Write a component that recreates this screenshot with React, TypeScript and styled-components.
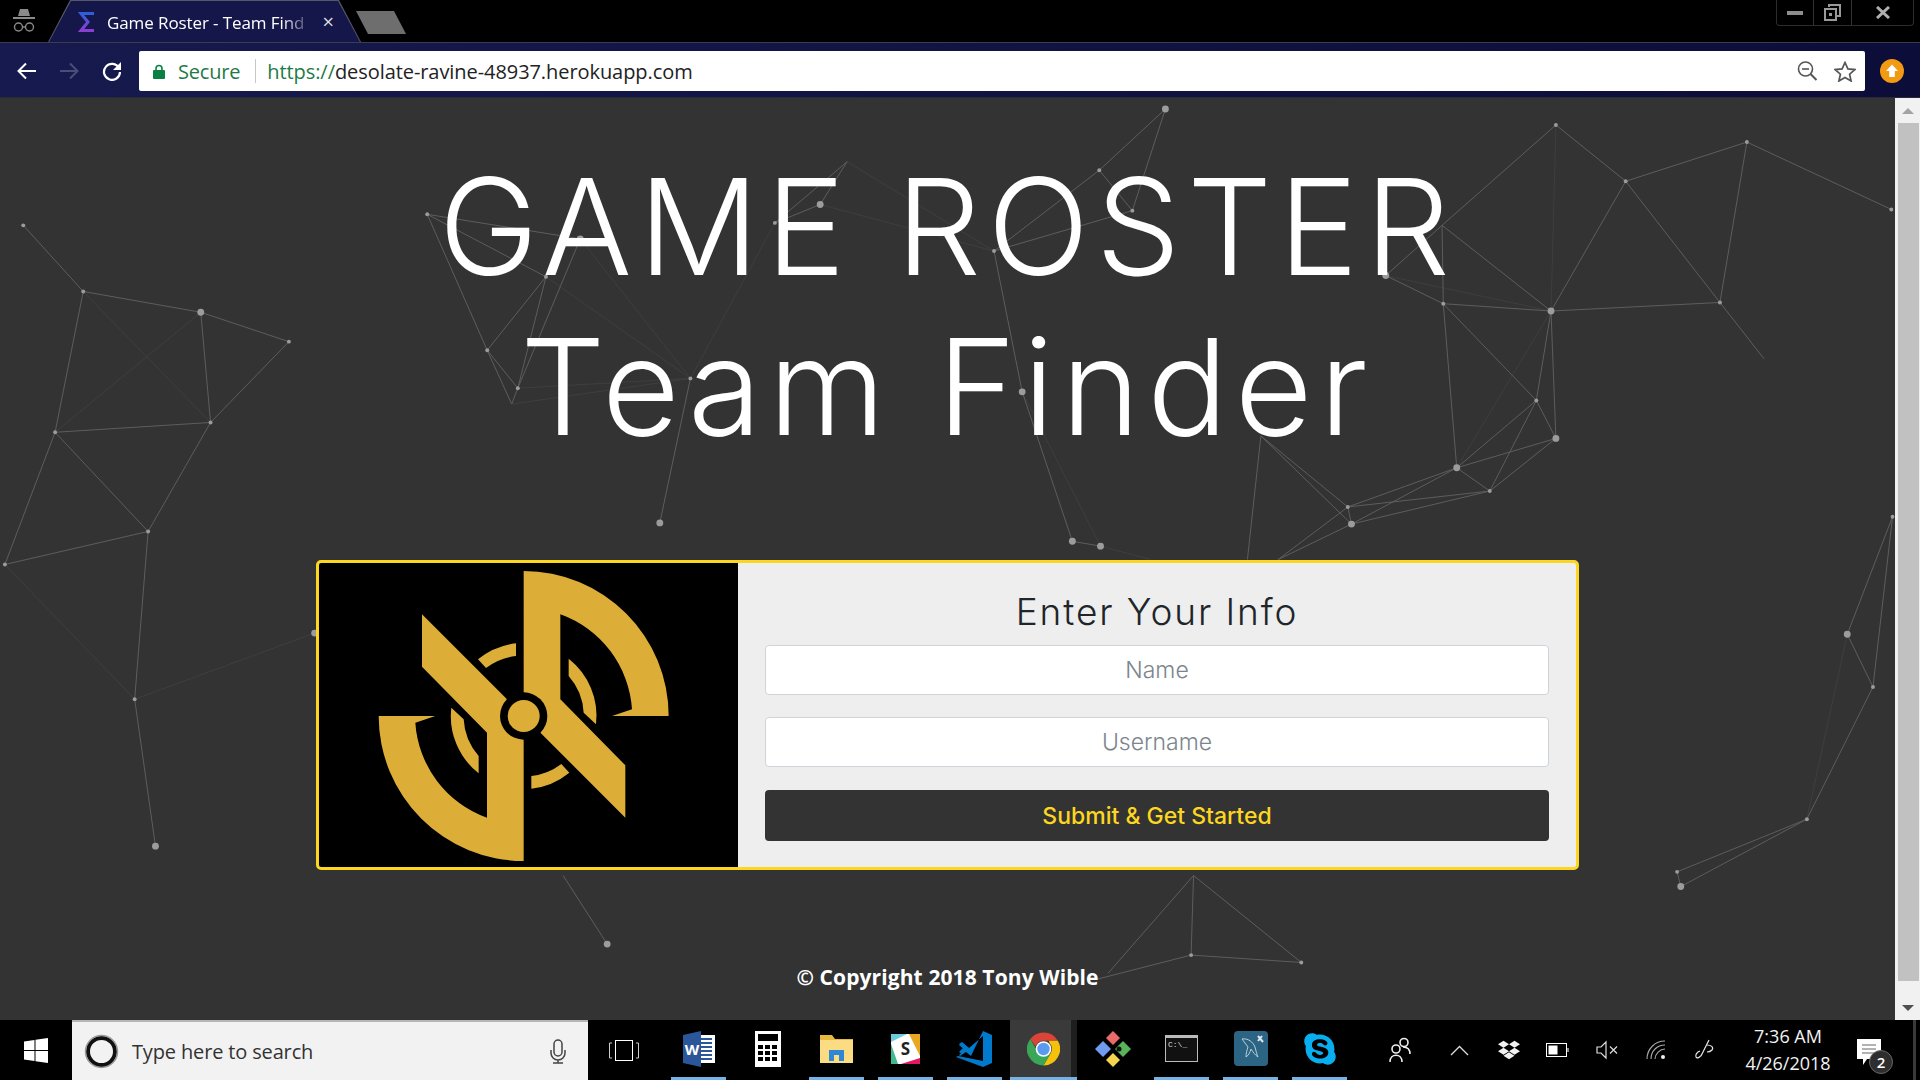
import React from 'react';
import styled, { createGlobalStyle } from 'styled-components';
import { FaDropbox, FaSkype } from 'react-icons/fa';

const GlobalStyle = createGlobalStyle`
  html, body {
    margin: 0;
    padding: 0;
    height: 100%;
    overflow: hidden;
    background: #000;
  }
  * { box-sizing: border-box; }
`;

const uiFont = `"Open Sans", "Liberation Sans", sans-serif`;
const pageFont = `Inter, "Open Sans", sans-serif`;

const Screen = styled.div`
  width: 1920px;
  height: 1080px;
  display: flex;
  flex-direction: column;
  font-family: ${uiFont};
`;

/* browser chrome */
const TabStrip = styled.div`
  height: 43px;
  background: #000;
  display: flex;
  align-items: flex-end;
  border-bottom: 1px solid #3b3c52;
`;

const IncognitoSlot = styled.div`
  width: 48px;
  height: 42px;
  display: flex;
  align-items: center;
  justify-content: center;
`;

const TabEdge = styled.div`
  width: 313px;
  height: 42px;
  background: #55566a;
  clip-path: polygon(0 100%, 22px 0, 291px 0, 100% 100%);
  padding: 1px 1px 0;
`;

const Tab = styled.div`
  height: 100%;
  background: #15174a;
  clip-path: polygon(0 100%, 22px 0, 289px 0, 100% 100%);
  display: flex;
  align-items: center;
  padding: 1px 26px 0 29px;
  color: #fff;
`;

const TabTitle = styled.div`
  margin-left: 11px;
  flex: 1;
  font-size: 17px;
  letter-spacing: -0.1px;
  white-space: nowrap;
  -webkit-mask-image: linear-gradient(to right, #000 84%, transparent 99%);
  mask-image: linear-gradient(to right, #000 84%, transparent 99%);
`;

const TabClose = styled.div`
  margin-left: 8px;
  font-size: 20px;
  line-height: 1;
  color: #ddd;
`;

const NewTab = styled.div`
  width: 50px;
  height: 23px;
  margin: 0 0 8px -5px;
  background: #6e6e6e;
  clip-path: polygon(0 0, 38px 0, 100% 100%, 12px 100%);
`;

const Spacer = styled.div`
  flex: 1;
`;

const WindowButtons = styled.div`
  align-self: flex-start;
  width: 138px;
  height: 26px;
  margin-right: 6px;
  border: 1px solid #2c2c2c;
  border-top: none;
  border-radius: 0 0 4px 4px;
  display: flex;
`;

const WindowButton = styled.div<{ $w: number; $last?: boolean }>`
  width: ${p => p.$w}px;
  display: flex;
  align-items: center;
  justify-content: center;
  border-right: ${p => (p.$last ? 'none' : '1px solid #333')};
`;

const Toolbar = styled.div`
  height: 55px;
  padding-top: 2px;
  background: linear-gradient(to right, #171a4e, #0c0d38);
  display: flex;
  align-items: center;
  border-bottom: 1px solid #2a2a35;
`;

const NavButton = styled.div<{ $w: number }>`
  width: ${p => p.$w}px;
  display: flex;
  justify-content: center;
`;

const AddressBar = styled.div`
  width: 1726px;
  height: 40px;
  background: #fff;
  border-radius: 2px;
  display: flex;
  align-items: center;
  padding: 0 9px 0 14px;
  font-size: 20px;
`;

const SecureLabel = styled.span`
  margin-left: 13px;
  color: #1f7a47;
  letter-spacing: -0.2px;
`;

const AddressDivider = styled.div`
  width: 1px;
  height: 24px;
  margin: 0 11px 0 15px;
  background: #c8c8c8;
`;

const Url = styled.span`
  color: #222;
  letter-spacing: -0.07px;
`;

const UrlScheme = styled.span`
  color: #1f7a47;
`;

const BarIcons = styled.div`
  display: flex;
  align-items: center;
  gap: 16px;
`;

const UpdateSlot = styled.div`
  flex: 1;
  display: flex;
  justify-content: center;
  padding-right: 2px;
`;

/* page */
const Main = styled.div`
  flex: 1;
  display: flex;
  min-height: 0;
`;

const Page = styled.main`
  position: relative;
  flex: 1;
  background: #333;
  overflow: hidden;
`;

const Network = styled.svg`
  position: absolute;
  inset: 0;
  width: 100%;
  height: 100%;
`;

const Content = styled.div`
  position: relative;
  display: flex;
  flex-direction: column;
  align-items: center;
  padding-top: 48px;
`;

const Title = styled.h1`
  margin: 0;
  font-family: ${pageFont};
  font-weight: 300;
  font-size: 134px;
  line-height: 160px;
  color: #fff;
  text-align: center;
`;

const TitleLine = styled.span<{ $spacing: number }>`
  display: block;
  white-space: nowrap;
  letter-spacing: ${p => p.$spacing}px;
`;

const Card = styled.section`
  width: 1263px;
  height: 310px;
  margin-top: 94px;
  display: flex;
  border: 3px solid #fdd71f;
  border-radius: 5px;
  background: #eee;
  overflow: hidden;
`;

const LogoPanel = styled.div`
  width: 419px;
  background: #000;
  display: flex;
  align-items: center;
  justify-content: center;
`;

const FormPanel = styled.form`
  flex: 1;
  display: flex;
  flex-direction: column;
  padding: 25px 27px 0;
`;

const FormHeading = styled.h2`
  margin: 0 0 9px;
  height: 48px;
  font-family: ${pageFont};
  font-weight: 300;
  font-size: 37px;
  line-height: 48px;
  letter-spacing: 1.9px;
  color: #212529;
  text-align: center;
`;

const TextInput = styled.input`
  height: 50px;
  margin-bottom: 22px;
  border: 1px solid #ced4da;
  border-radius: 4px;
  background: #fff;
  text-align: center;
  font-family: ${pageFont};
  font-weight: 300;
  font-size: 23px;
  outline: none;

  &::placeholder {
    color: #7d858c;
    opacity: 1;
  }
`;

const SubmitButton = styled.button`
  height: 51px;
  margin-top: 1px;
  border: none;
  border-radius: 4px;
  background: #333;
  color: #fdd71f;
  font-family: ${pageFont};
  font-weight: 500;
  font-size: 23px;
  cursor: pointer;
`;

const Copyright = styled.p`
  margin: 93px 0 0;
  font-family: ${uiFont};
  font-weight: 700;
  font-size: 21px;
  line-height: 28px;
  letter-spacing: 0.1px;
  color: #fff;
`;

const Scrollbar = styled.div`
  width: 25px;
  background: #f1f1f1;
  display: flex;
  flex-direction: column;
  align-items: center;
  padding-left: 1px;
`;

const ScrollArrow = styled.div<{ $down?: boolean }>`
  height: 25px;
  flex: none;
  display: flex;
  align-items: center;
  justify-content: center;

  &::before {
    content: '';
    border-left: 6px solid transparent;
    border-right: 6px solid transparent;
    ${p => (p.$down ? 'border-top: 6px solid #505050;' : 'border-bottom: 6px solid #a3a3a3;')}
  }
`;

const ScrollThumb = styled.div`
  width: 21px;
  height: 858px;
  background: #c1c1c1;
`;

/* taskbar */
const Taskbar = styled.footer`
  height: 60px;
  background: #000;
  display: flex;
  align-items: stretch;
  color: #fff;
`;

const StartButton = styled.div`
  width: 72px;
  display: flex;
  align-items: center;
  justify-content: center;
`;

const SearchBox = styled.div`
  width: 516px;
  background: #f2f2f2;
  border-top: 2px solid #b5b5b5;
  display: flex;
  align-items: center;
  padding: 0 21px 0 12px;
`;

const SearchText = styled.span`
  margin-left: 13px;
  flex: 1;
  font-size: 20px;
  color: #333;
  letter-spacing: -0.15px;
`;

const TaskView = styled.div`
  width: 72px;
  margin-right: 4px;
  display: flex;
  align-items: center;
  justify-content: center;
`;

const AppCell = styled.div<{ $active?: boolean }>`
  width: 69px;
  padding: ${p => (p.$active ? '0 1px' : '0 7px')};
`;

const AppButton = styled.div<{ $open?: boolean; $active?: boolean }>`
  height: 100%;
  display: flex;
  align-items: center;
  justify-content: center;
  border-bottom: 3px solid ${p => (p.$open ? '#76b3e4' : 'transparent')};
  background: ${p => (p.$active ? 'linear-gradient(to right, #3a3a3a 91%, #1e1e1e 91%)' : 'transparent')};
`;

const TrayCell = styled.div<{ $ml?: number; $w?: number }>`
  width: ${p => p.$w ?? 49}px;
  margin-left: ${p => p.$ml ?? 0}px;
  display: flex;
  align-items: center;
  justify-content: center;
`;

const Clock = styled.div`
  width: 116px;
  margin-left: 1px;
  display: flex;
  flex-direction: column;
  align-items: center;
  justify-content: center;
  gap: 6px;
  font-size: 18px;
  line-height: 21px;
  color: #f2f2f2;
`;

const NoticeSlot = styled.div`
  position: relative;
  width: 70px;
  padding: 5px 22px 0 0;
  display: flex;
  align-items: center;
  justify-content: center;
  border-right: 3px solid #3a3a3a;
`;

const NoticeBadge = styled.div`
  position: absolute;
  right: 20px;
  bottom: 6px;
  width: 24px;
  height: 24px;
  border-radius: 50%;
  background: #2e2e2e;
  border: 1px solid #666;
  display: flex;
  align-items: center;
  justify-content: center;
  font-size: 15px;
  font-weight: 600;
`;

/* background graph, in the coordinates of a 1568 wide frame */
type P = [number, number];
const pts: Record<string, P> = {
  a: [19, 184], b: [68, 238], c: [164, 255], d: [236, 279], e: [45, 353], f: [172, 345], g: [121, 434], h: [4, 461],
  i: [110, 571], j: [127, 691], k: [349, 175], l: [398, 286], m: [446, 226], n: [423, 317], o: [418, 330], k2: [474, 195],
  T2: [564, 309], p: [633, 182], q: [692, 132], r: [670, 167], s: [812, 205], t: [898, 139], u: [925, 172], v: [952, 89],
  w: [835, 320], x: [876, 442], y: [899, 446], y2: [940, 457], z: [1132, 225], P: [1178, 184], A: [1179, 248], B: [1267, 254], C: [1328, 148],
  D: [1271, 102], E: [1427, 116], F: [1545, 171], G: [1405, 247], H: [1441, 293], I: [1255, 327], J: [1271, 358],
  K: [1217, 401], L: [1190, 382], M: [1104, 428], N: [1101, 414], O: [1030, 356], Q: [1044, 457], R: [1019, 457],
  S: [539, 427], U: [460, 715], V: [496, 771], W: [895, 800], X: [975, 715], X2: [905, 795], Y: [973, 780],
  Z: [1063, 786], aa: [1509, 518], ab: [1546, 422], ac: [1530, 561], ad: [1476, 669], ae: [1373, 724], af: [1370, 712],
  ag: [257, 517],
};

const edges = [
  'a-b', 'b-c', 'c-d', 'b-e', 'c-f', 'f-e', 'd-f', 'e-g', 'f-g', 'e-h', 'h-g', 'g-i', 'i-j',
  'k-l', 'k-m', 'k-k2', 'l-m', 'm-n', 'l-n', 'l-o', 'o-n', 'k2-n', 'T2-S', 'p-q', 'p-r', 'r-q',
  's-t', 't-u', 'v-u', 't-v', 'u-s', 's-w', 'w-x', 'x-y',
  'P-D', 'P-A', 'P-B', 'P-z', 'z-A', 'A-B', 'B-C', 'C-D', 'C-E', 'E-F', 'C-G', 'E-G', 'G-H', 'G-B',
  'B-I', 'B-J', 'I-J', 'A-I', 'A-L', 'I-L', 'I-K', 'L-K', 'L-J', 'K-J', 'L-M', 'L-N', 'N-K', 'M-K', 'N-M', 'O-M', 'O-N', 'M-Q', 'N-Q', 'O-R',
  'U-V', 'X2-X', 'X-Y', 'W-Y', 'X-Z', 'Y-Z',
  'aa-ab', 'ab-ac', 'aa-ac', 'ac-ad', 'ad-ae', 'ad-af', 'ae-af',
];

const faintEdges = [
  'b-f', 'c-e', 'h-i', 'i-ag', 'm-T2', 'n-T2', 'o-T2', 'p-T2', 'k2-T2', 'r-s', 'q-s', 'w-y', 'y-y2', 'z-B', 'B-D', 'B-L', 'aa-ad',
];

const dots = ['a', 'b', 'c', 'd', 'e', 'f', 'g', 'h', 'i', 'j', 'k', 'l', 'm', 'n', 'k2', 'T2', 'p', 'r', 's', 't', 'u', 'v', 'w', 'x', 'y', 'z', 'A', 'B', 'C', 'D', 'E', 'F', 'G', 'I', 'J', 'K', 'L', 'M', 'N', 'S', 'V', 'Y', 'Z', 'aa', 'ac', 'ad', 'ae', 'af', 'ag', 'ab'];
const bigDots = ['j', 'S', 'V', 'B', 'ae', 'aa', 'L', 'J', 'M', 'x', 'y', 'c', 'v', 'k2', 'r', 'z', 'w', 'ag'];

const NetworkBackground = () => (
  <Network viewBox="0 80 1548 753" preserveAspectRatio="none">
    {faintEdges.map(e => {
      const [from, to] = e.split('-');
      return (
        <line
          key={e}
          x1={pts[from][0]}
          y1={pts[from][1]}
          x2={pts[to][0]}
          y2={pts[to][1]}
          stroke="#3e3e3e"
          strokeWidth="0.8"
        />
      );
    })}
    {edges.map(e => {
      const [from, to] = e.split('-');
      return (
        <line
          key={e}
          x1={pts[from][0]}
          y1={pts[from][1]}
          x2={pts[to][0]}
          y2={pts[to][1]}
          stroke="#5e5e5e"
          strokeWidth="0.8"
        />
      );
    })}
    {dots.map(d => (
      <circle key={d} cx={pts[d][0]} cy={pts[d][1]} r={bigDots.includes(d) ? 2.8 : 1.6} fill="#9c9c9c" />
    ))}
  </Network>
);

const blade = 'M640 45A435 435 0 0 1 1075 480L905 480L965 460A325 325 0 0 0 750 175L750 430L945 628L945 785L640 480Z';
const innerArc = 'M775 308A218 218 0 0 1 857 505L820 470A180 180 0 0 0 775 360Z';
const sideArc = 'M617 262L617 300A181 181 0 0 0 527 336L503 310A218 218 0 0 1 617 262Z';

const Logo = () => (
  <svg width="419" height="304" viewBox="26 21 1257 912">
    <g fill="#dcae38">
      {[0, 180].map(r => (
        <g key={r} transform={`rotate(${r} 640 480)`}>
          <path d={blade} />
          <path d={innerArc} />
          <path d={sideArc} />
        </g>
      ))}
      <circle cx="640" cy="480" r="71" fill="#000" />
      <circle cx="640" cy="480" r="48" />
    </g>
  </svg>
);

const Incognito = () => (
  <svg width="24" height="26" viewBox="0 0 24 26" fill="none" stroke="#8a8a8a">
    <path d="M8 1h8l2 7H6z" fill="#8a8a8a" stroke="none" />
    <path d="M1 9h22v2H1z" fill="#8a8a8a" stroke="none" />
    <circle cx="6.5" cy="19" r="4" strokeWidth="1.4" />
    <circle cx="17.5" cy="19" r="4" strokeWidth="1.4" />
    <path d="M10.5 19h3" strokeWidth="1.4" />
  </svg>
);

const Favicon = () => (
  <svg width="18" height="22" viewBox="0 0 18 22" fill="none">
    <defs>
      <linearGradient id="sigma" x1="0" y1="0" x2="0" y2="1">
        <stop offset="0" stopColor="#2f5fd8" />
        <stop offset="1" stopColor="#8a3fd0" />
      </linearGradient>
    </defs>
    <path d="M16 2.5H3l7 8.5-7 8.5h13" stroke="url(#sigma)" strokeWidth="3" />
  </svg>
);

const SmallIcon = ({ children, w = 20, h = 20, vb }: { children: React.ReactNode; w?: number; h?: number; vb?: string }) => (
  <svg width={w} height={h} viewBox={vb ?? `0 0 ${w} ${h}`} fill="none">
    {children}
  </svg>
);

const ChromeLogo = () => (
  <svg width="33" height="36" viewBox="0 0 32 32">
    <path d="M16 0a16 16 0 0 1 13.9 8H16a8 8 0 0 0-7.6 5.5L3.2 6.3A16 16 0 0 1 16 0z" fill="#db4437" />
    <path d="M29.9 8A16 16 0 0 1 16 32l6.9-12A8 8 0 0 0 22 10.5L21 8z" fill="#f4c20d" />
    <path d="M16 32A16 16 0 0 1 3.2 6.3l6.7 11.4A8 8 0 0 0 22.9 20L16 32z" fill="#3aa757" />
    <circle cx="16" cy="16" r="7.6" fill="#fff" />
    <circle cx="16" cy="16" r="6" fill="#5a9bf0" />
  </svg>
);

const WordLogo = () => (
  <svg width="32" height="36" viewBox="0 0 32 36">
    <rect x="12" y="4" width="20" height="28" fill="#fff" />
    <path d="M15 8h14M15 12h14M15 16h14M15 20h14M15 24h14M15 28h14" stroke="#2b579a" strokeWidth="2" />
    <path d="M0 4l18-4v36L0 32z" fill="#2b579a" />
    <text x="9" y="24" fontSize="15" fontWeight="700" fill="#fff" fontFamily="Open Sans" textAnchor="middle">W</text>
  </svg>
);

const CalcLogo = () => (
  <svg width="26" height="36" viewBox="0 0 26 36">
    <rect width="26" height="36" fill="#fff" />
    <rect x="3" y="3" width="20" height="7" fill="#000" />
    {[14, 20, 26].map(y => [3, 10, 17].map(x => <rect key={`${x}${y}`} x={x} y={y} width="5" height="4" fill="#000" />))}
  </svg>
);

const FolderLogo = () => (
  <svg width="33" height="28" viewBox="0 0 33 28">
    <path d="M0 0h12l3 4h18v24H0z" fill="#e8b93f" />
    <rect y="5" width="33" height="23" fill="#fbdc82" />
    <path d="M9 26V15h15v11h-5v-6h-5v6z" fill="#2f86d4" />
  </svg>
);

const SlackLogo = () => (
  <svg width="29" height="30" viewBox="0 0 29 30">
    <rect width="29" height="30" fill="#fff" />
    <path d="M0 0h16L0 8z" fill="#6ecadc" />
    <path d="M18 0h11v22z" fill="#e9a820" />
    <path d="M29 24v6H10z" fill="#e01765" />
    <path d="M0 10v20h7z" fill="#3eb991" />
    <text x="14.5" y="21" fontSize="17" fontWeight="700" fill="#222" fontFamily="Open Sans" textAnchor="middle">S</text>
  </svg>
);

const VsCodeLogo = () => (
  <svg width="37" height="36" viewBox="0 0 37 36">
    <path d="M27 0l9 4v28l-9 4L0 26l2-1 25 5V5L13 17l-7-5-3 2 6 5-6 5 1 1 6-4 5 4z" fill="#007acc" />
    <path d="M3 13l3-2 7 6-7 6-3-2 4-4z" fill="#007acc" />
  </svg>
);

const GitKrakenLogo = () => (
  <svg width="36" height="36" viewBox="0 0 36 36">
    <path d="M18 0l-7 7 7 7 7-7z" fill="#e96b6b" />
    <path d="M8 10L0 18l8 8 8-8z" fill="#6f9bf0" />
    <path d="M28 10l-8 8 8 8 8-8z" fill="#59b35a" />
    <path d="M18 22l-7 7 7 7 7-7z" fill="#f3d54e" />
    <circle cx="24" cy="18" r="2.5" fill="#111" />
  </svg>
);

const CmdLogo = () => (
  <svg width="33" height="27" viewBox="0 0 33 27">
    <rect width="33" height="27" fill="#bbb" />
    <rect x="1" y="3" width="31" height="23" fill="#111" />
    <text x="3" y="12" fontSize="8" fill="#ddd" fontFamily="Liberation Mono">C:\_</text>
  </svg>
);

const MySqlLogo = () => (
  <svg width="34" height="35" viewBox="0 0 34 35">
    <rect width="34" height="35" rx="4" fill="#2c6484" />
    <path d="M8 8c6-1 11 3 13 8 1 4 2 8 3 10-3-2-5-5-7-8-1 3-2 6-5 8 0-4 1-7 2-10-2-3-4-5-6-8z" stroke="#b8d0dc" strokeWidth="1" fill="none" />
    <path d="M24 5l5 6M28 5l-4 5" stroke="#dce8ee" strokeWidth="2" />
  </svg>
);

const apps = [
  { id: 'word', node: <WordLogo />, open: true },
  { id: 'calc', node: <CalcLogo /> },
  { id: 'folder', node: <FolderLogo />, open: true },
  { id: 'slack', node: <SlackLogo />, open: true },
  { id: 'vscode', node: <VsCodeLogo />, open: true },
  { id: 'chrome', node: <ChromeLogo />, open: true, active: true },
  { id: 'git', node: <GitKrakenLogo /> },
  { id: 'cmd', node: <CmdLogo />, open: true },
  { id: 'mysql', node: <MySqlLogo />, open: true },
  { id: 'skype', node: <FaSkype size={36} color="#08aef0" />, open: true },
];

const App: React.FC = () => (
  <Screen>
    <GlobalStyle />
    <TabStrip>
      <IncognitoSlot>
        <Incognito />
      </IncognitoSlot>
      <TabEdge>
        <Tab>
          <Favicon />
          <TabTitle>Game Roster - Team Find</TabTitle>
          <TabClose>×</TabClose>
        </Tab>
      </TabEdge>
      <NewTab />
      <Spacer />
      <WindowButtons>
        <WindowButton $w={37}>
          <SmallIcon w={16} h={4}>
            <rect width="16" height="4" fill="#8d8d8d" />
          </SmallIcon>
        </WindowButton>
        <WindowButton $w={38}>
          <SmallIcon w={17} h={17}>
            <path d="M5 3V1h11v11h-3M1 5h11v11H1z" stroke="#9a9a9a" strokeWidth="2" />
            <rect x="5" y="9" width="3" height="3" fill="#9a9a9a" />
          </SmallIcon>
        </WindowButton>
        <WindowButton $w={61} $last>
          <SmallIcon w={14} h={13}>
            <path d="M1 1l12 11M13 1L1 12" stroke="#b0b0b0" strokeWidth="3" />
          </SmallIcon>
        </WindowButton>
      </WindowButtons>
    </TabStrip>

    <Toolbar>
      <NavButton $w={53}>
        <SmallIcon w={20} h={18}>
          <path d="M19 9H2M9 1.5L1.5 9 9 16.5" stroke="#fff" strokeWidth="2" />
        </SmallIcon>
      </NavButton>
      <NavButton $w={32}>
        <SmallIcon w={20} h={18}>
          <path d="M1 9h17M11 1.5L18.5 9 11 16.5" stroke="#4a4d78" strokeWidth="2" />
        </SmallIcon>
      </NavButton>
      <NavButton $w={54}>
        <SmallIcon w={20} h={20}>
          <path d="M17 7a8 8 0 1 0 1 4" stroke="#fff" strokeWidth="2.2" />
          <path d="M19 1v8h-8z" fill="#fff" />
        </SmallIcon>
      </NavButton>
      <AddressBar>
        <SmallIcon w={12} h={15}>
          <path d="M3 7V4.5a3 3 0 0 1 6 0V7" stroke="#0b8043" strokeWidth="1.6" />
          <rect y="6" width="12" height="9" rx="1" fill="#0b8043" />
        </SmallIcon>
        <SecureLabel>Secure</SecureLabel>
        <AddressDivider />
        <Url>
          <UrlScheme>https://</UrlScheme>desolate-ravine-48937.herokuapp.com
        </Url>
        <Spacer />
        <BarIcons>
          <SmallIcon w={21} h={20}>
            <circle cx="8.5" cy="8" r="7" stroke="#555" strokeWidth="1.6" />
            <path d="M5 8h7" stroke="#555" strokeWidth="1.6" />
            <path d="M13.5 13l6 6" stroke="#555" strokeWidth="2" />
          </SmallIcon>
          <SmallIcon w={22} h={21}>
            <path d="M11 1.5l2.9 6.4 6.9.7-5.2 4.6 1.5 6.8-6.1-3.5-6.1 3.5 1.5-6.8L1.2 8.6l6.9-.7z" stroke="#555" strokeWidth="1.7" />
          </SmallIcon>
        </BarIcons>
      </AddressBar>
      <UpdateSlot>
        <SmallIcon w={24} h={24}>
          <circle cx="12" cy="12" r="12" fill="#f39a13" />
          <path d="M12 5.5l6 6.5h-3.2v6H9.2v-6H6z" fill="#fff" />
        </SmallIcon>
      </UpdateSlot>
    </Toolbar>

    <Main>
      <Page>
        <NetworkBackground />
        <Content>
          <Title>
            <TitleLine $spacing={6.5}>GAME ROSTER</TitleLine>
            <TitleLine $spacing={7}>Team Finder</TitleLine>
          </Title>
          <Card>
            <LogoPanel>
              <Logo />
            </LogoPanel>
            <FormPanel>
              <FormHeading>Enter Your Info</FormHeading>
              <TextInput placeholder="Name" />
              <TextInput placeholder="Username" />
              <SubmitButton type="button">Submit &amp; Get Started</SubmitButton>
            </FormPanel>
          </Card>
          <Copyright>© Copyright 2018 Tony Wible</Copyright>
        </Content>
      </Page>
      <Scrollbar>
        <ScrollArrow />
        <ScrollThumb />
        <Spacer />
        <ScrollArrow $down />
      </Scrollbar>
    </Main>

    <Taskbar>
      <StartButton>
        <SmallIcon w={24} h={25}>
          <path d="M0 3.5l10.5-1.5v10H0zM11.5 1.8L24 0v12H11.5zM0 13h10.5v10L0 21.5zM11.5 13H24v12l-12.5-1.8z" fill="#fff" />
        </SmallIcon>
      </StartButton>
      <SearchBox>
        <SmallIcon w={35} h={35}>
          <circle cx="17.5" cy="17.5" r="13.5" stroke="#111" strokeWidth="4" />
          <circle cx="17.5" cy="17.5" r="16" stroke="#999" strokeWidth="1.5" />
        </SmallIcon>
        <SearchText>Type here to search</SearchText>
        <SmallIcon w={18} h={25}>
          <rect x="5" y="1" width="8" height="16" rx="4" stroke="#444" strokeWidth="1.5" />
          <path d="M2 11v3a7 7 0 0 0 14 0v-3M9 21v3M4 24h10" stroke="#444" strokeWidth="1.5" />
        </SmallIcon>
      </SearchBox>
      <TaskView>
        <SmallIcon w={30} h={21}>
          <rect x="6.5" y="0.5" width="17" height="20" stroke="#fff" />
          <path d="M3 3H0.5v15H3M27 3h2.5v15H27" stroke="#ccc" />
        </SmallIcon>
      </TaskView>
      {apps.map(app => (
        <AppCell key={app.id} $active={app.active}>
          <AppButton $open={app.open} $active={app.active}>
            {app.node}
          </AppButton>
        </AppCell>
      ))}
      <TrayCell $ml={21} $w={50}>
        <SmallIcon w={22} h={26}>
          <circle cx="15" cy="5.5" r="4" stroke="#eee" strokeWidth="1.6" />
          <circle cx="7" cy="12" r="4" stroke="#eee" strokeWidth="1.6" />
          <path d="M1 25c0-9 12-9 12 0M14 10c5 0 7 3 7 7" stroke="#eee" strokeWidth="1.6" />
        </SmallIcon>
      </TrayCell>
      <TrayCell $ml={10}>
        <SmallIcon w={19} h={11}>
          <path d="M1 10l8.5-8.5L18 10" stroke="#ddd" strokeWidth="1.3" />
        </SmallIcon>
      </TrayCell>
      <TrayCell>
        <FaDropbox size={22} color="#f2f2f2" />
      </TrayCell>
      <TrayCell>
        <SmallIcon w={23} h={14}>
          <rect x="0.5" y="0.5" width="20" height="13" stroke="#fff" />
          <rect x="2.5" y="2.5" width="9" height="9" fill="#fff" />
          <rect x="21" y="5" width="2" height="4" fill="#888" />
        </SmallIcon>
      </TrayCell>
      <TrayCell>
        <SmallIcon w={22} h={20}>
          <path d="M1 7h4l5-5v16l-5-5H1z" stroke="#ddd" strokeWidth="1.2" />
          <path d="M14 6.5l7 7M21 6.5l-7 7" stroke="#ddd" strokeWidth="1.2" />
        </SmallIcon>
      </TrayCell>
      <TrayCell>
        <SmallIcon w={20} h={20}>
          <path d="M1 19C1 9 9 1 19 1M5 19c0-8 6-14 14-14M9 19c0-5 5-10 10-10" stroke="#aaa" strokeWidth="1.1" />
          <circle cx="17" cy="17" r="2" fill="#eee" />
        </SmallIcon>
      </TrayCell>
      <TrayCell>
        <SmallIcon w={21} h={23}>
          <path d="M15 1L8 15c-1 3-5 5-6 3s1-5 4-6M13 6c4 0 7 2 5 5-1 1-3 2-5 2" stroke="#e6e6e6" strokeWidth="1.2" />
        </SmallIcon>
      </TrayCell>
      <Clock>
        <span>7:36 AM</span>
        <span>4/26/2018</span>
      </Clock>
      <NoticeSlot>
        <SmallIcon w={24} h={28}>
          <path d="M0 0h24v20H10l-4 6v-6H0z" fill="#fff" />
          <path d="M5 6h14M5 10h14M5 14h14" stroke="#666" />
        </SmallIcon>
        <NoticeBadge>2</NoticeBadge>
      </NoticeSlot>
    </Taskbar>
  </Screen>
);

export default App;
